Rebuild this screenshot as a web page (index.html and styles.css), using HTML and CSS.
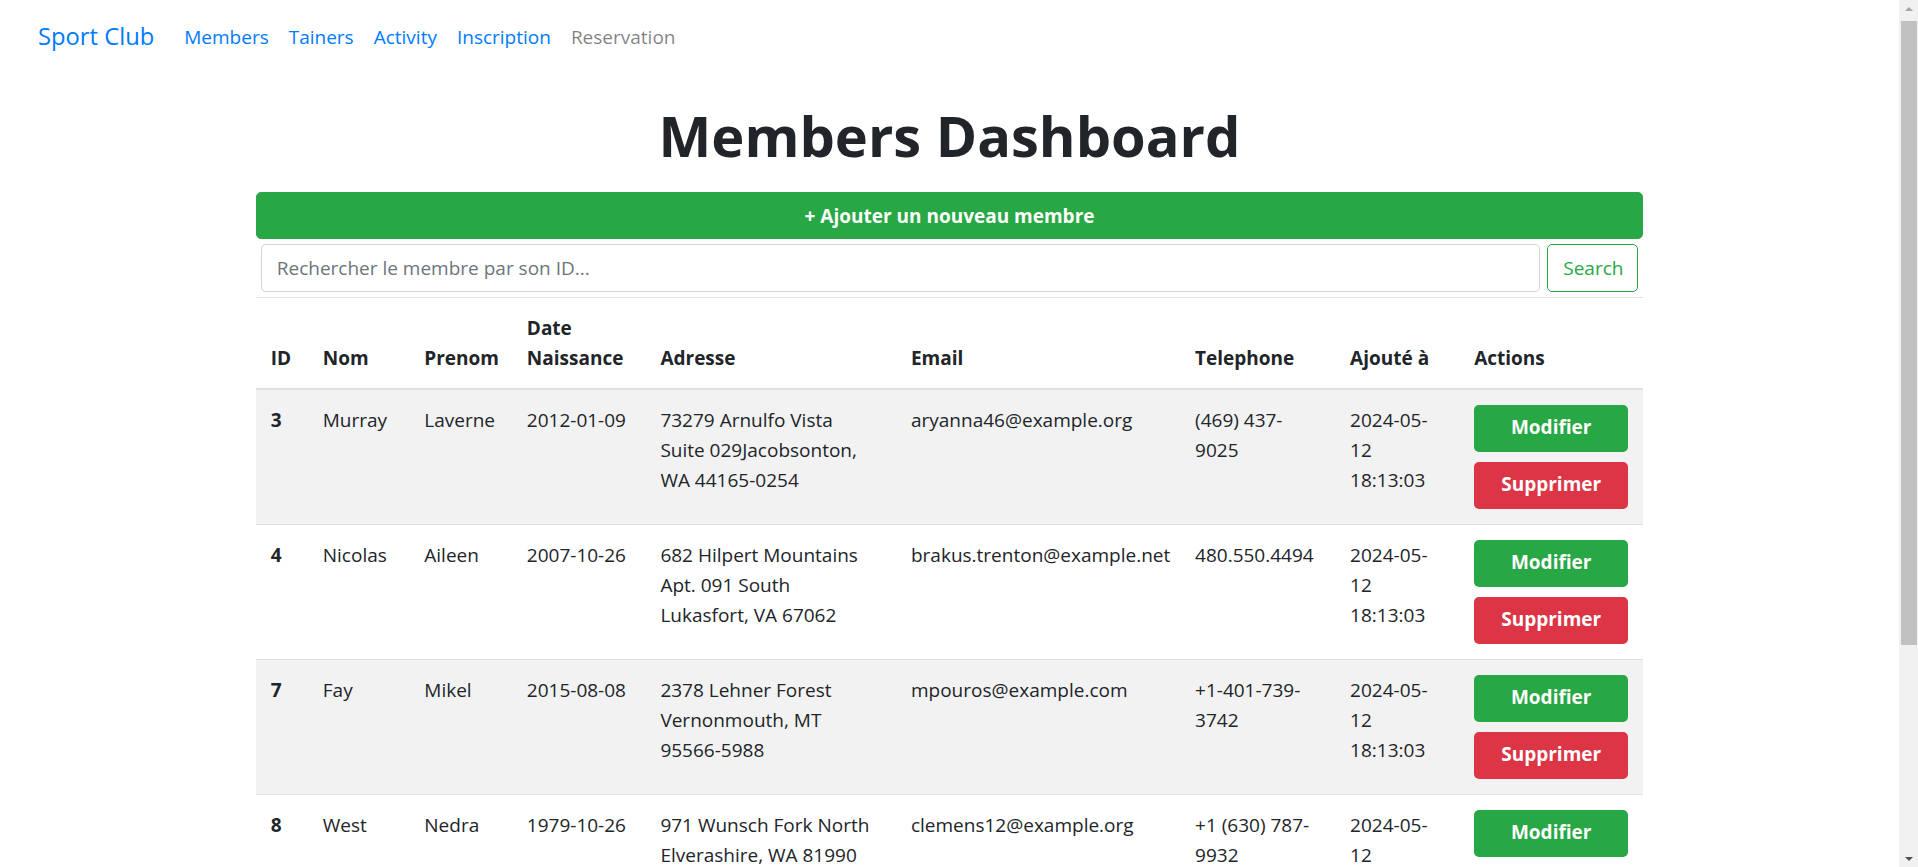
FILE: index.html
```html
<!DOCTYPE html>
<html lang="fr">
<head>
<meta charset="utf-8">
<title>Members Dashboard</title>
<link rel="stylesheet" href="styles.css">
</head>
<body>
<div class="screen">
  <div class="page">
    <nav class="navbar">
      <a class="brand" href="#">Sport Club</a>
      <a class="nav-link" href="#">Members</a>
      <a class="nav-link" href="#">Tainers</a>
      <a class="nav-link" href="#">Activity</a>
      <a class="nav-link" href="#">Inscription</a>
      <a class="nav-link muted" href="#">Reservation</a>
    </nav>
    <main class="container">
      <h1 class="title">Members Dashboard</h1>
      <a class="btn-add" href="#">+ Ajouter un nouveau membre</a>
      <form class="search">
        <input class="search-input" type="text" placeholder="Rechercher le membre par son ID...">
        <button class="btn-search" type="button">Search</button>
      </form>
      <table class="members">
        <colgroup>
          <col class="c-id"><col class="c-nom"><col class="c-prenom"><col class="c-date"><col class="c-adr"><col class="c-email"><col class="c-tel"><col class="c-added"><col class="c-act">
        </colgroup>
        <thead>
          <tr>
            <th>ID</th><th>Nom</th><th>Prenom</th><th>Date<br>Naissance</th><th>Adresse</th><th>Email</th><th>Telephone</th><th>Ajouté à</th><th>Actions</th>
          </tr>
        </thead>
        <tbody>
          <tr>
            <th>3</th><td>Murray</td><td>Laverne</td><td class="nw">2012-01-09</td>
            <td class="nw">73279 Arnulfo Vista<br>Suite 029Jacobsonton,<br>WA 44165-0254</td>
            <td>aryanna46@example.org</td><td class="nw">(469) 437-<br>9025</td><td class="nw">2024-05-<br>12<br>18:13:03</td>
            <td><a class="btn-act ok" href="#">Modifier</a><a class="btn-act del" href="#">Supprimer</a></td>
          </tr>
          <tr>
            <th>4</th><td>Nicolas</td><td>Aileen</td><td class="nw">2007-10-26</td>
            <td class="nw">682 Hilpert Mountains<br>Apt. 091 South<br>Lukasfort, VA 67062</td>
            <td>brakus.trenton@example.net</td><td class="nw">480.550.4494</td><td class="nw">2024-05-<br>12<br>18:13:03</td>
            <td><a class="btn-act ok" href="#">Modifier</a><a class="btn-act del" href="#">Supprimer</a></td>
          </tr>
          <tr>
            <th>7</th><td>Fay</td><td>Mikel</td><td class="nw">2015-08-08</td>
            <td class="nw">2378 Lehner Forest<br>Vernonmouth, MT<br>95566-5988</td>
            <td>mpouros@example.com</td><td class="nw">+1-401-739-<br>3742</td><td class="nw">2024-05-<br>12<br>18:13:03</td>
            <td><a class="btn-act ok" href="#">Modifier</a><a class="btn-act del" href="#">Supprimer</a></td>
          </tr>
          <tr>
            <th>8</th><td>West</td><td>Nedra</td><td class="nw">1979-10-26</td>
            <td class="nw">971 Wunsch Fork North<br>Elverashire, WA 81990</td>
            <td>clemens12@example.org</td><td class="nw">+1 (630) 787-<br>9932</td><td class="nw">2024-05-<br>12<br>18:13:03</td>
            <td><a class="btn-act ok" href="#">Modifier</a><a class="btn-act del" href="#">Supprimer</a></td>
          </tr>
        </tbody>
      </table>
    </main>
  </div>
  <div class="scrollbar">
    <div class="sb-btn"><span class="arrow-up"></span></div>
    <div class="sb-thumb"></div>
    <div class="sb-fill"></div>
    <div class="sb-btn"><span class="arrow-down"></span></div>
  </div>
</div>
</body>
</html>
```

FILE: styles.css
```css
html, body {
  margin: 0;
  height: 100%;
  overflow: hidden;
}
body {
  font-family: "Open Sans", "Noto Sans", Arial, sans-serif;
  font-size: 19px;
  line-height: 30px;
  color: #212529;
  background: #fff;
}
a { text-decoration: none; }

.screen {
  display: flex;
  height: 100vh;
}
.page {
  flex: 1;
  min-width: 0;
  overflow: hidden;
}

/* navbar */
.navbar {
  display: flex;
  align-items: center;
  padding: 12px 20px 8px 38px;
}
.brand {
  font-size: 23.75px;
  line-height: 37.5px;
  padding: 6.25px 0;
  margin-right: 20px;
  color: #007bff;
}
.nav-link {
  padding: 10px;
  line-height: 30px;
  color: #007bff;
}
.nav-link.muted { color: rgba(0,0,0,.5); }

/* container */
.container {
  max-width: 1387.5px;
  margin: 0 auto;
}
.title {
  font-size: 56px;
  font-weight: 700;
  line-height: 72px;
  text-align: center;
  margin: 29px 0 21px;
}
.btn-add {
  display: block;
  background: #28a745;
  border: 1px solid #28a745;
  border-radius: 5px;
  color: #fff;
  font-weight: 700;
  text-align: center;
  padding: 7.5px 15px;
  line-height: 30px;
}
.search {
  display: flex;
  gap: 7px;
  margin: 5px;
}
.search-input {
  flex: 1;
  box-sizing: border-box;
  height: 47.5px;
  padding: 7.5px 15px;
  border: 1px solid #ced4da;
  border-radius: 5px;
  font: inherit;
  color: #495057;
}
.search-input::placeholder { color: #6c757d; }
.btn-search {
  box-sizing: border-box;
  width: 91px;
  height: 47.5px;
  padding: 7.5px 15px;
  border: 1px solid #28a745;
  border-radius: 5px;
  background: #fff;
  color: #28a745;
  font: inherit;
}

/* table */
.members {
  width: 100%;
  border-collapse: collapse;
  table-layout: fixed;
}
.c-id { width: 52px; }
.c-nom { width: 101.5px; }
.c-prenom { width: 102.5px; }
.c-date { width: 133.5px; }
.c-adr { width: 250.5px; }
.c-email { width: 284px; }
.c-tel { width: 155px; }
.c-added { width: 124px; }
.c-act { width: 184px; }

.members th, .members td {
  padding: 15px;
  border-top: 1px solid #dee2e6;
  vertical-align: top;
  text-align: left;
}
.members th { font-weight: 700; }
.members thead th {
  vertical-align: bottom;
  border-bottom: 2px solid #dee2e6;
}
.members tbody tr:nth-child(odd) { background: #f2f2f2; }
.members .nw { white-space: nowrap; }

.btn-act {
  display: block;
  box-sizing: border-box;
  height: 47px;
  padding: 7.5px 15px;
  line-height: 30px;
  border-radius: 5px;
  color: #fff;
  font-weight: 700;
  text-align: center;
}
.btn-act.ok { background: #28a745; margin-bottom: 10px; }
.btn-act.del { background: #dc3545; }

/* scrollbar */
.scrollbar {
  width: 19px;
  background: #f1f1f1;
  display: flex;
  flex-direction: column;
}
.sb-btn {
  height: 17px;
  display: flex;
  align-items: center;
  justify-content: center;
}
.arrow-up {
  width: 0; height: 0;
  border-left: 4px solid transparent;
  border-right: 4px solid transparent;
  border-bottom: 4px solid #a3a3a3;
}
.arrow-down {
  width: 0; height: 0;
  border-left: 4px solid transparent;
  border-right: 4px solid transparent;
  border-top: 4px solid #505050;
}
.sb-thumb {
  margin: 4px 1px 0 2px;
  height: 624px;
  background: #c1c1c1;
}
.sb-fill { flex: 1; }
```
